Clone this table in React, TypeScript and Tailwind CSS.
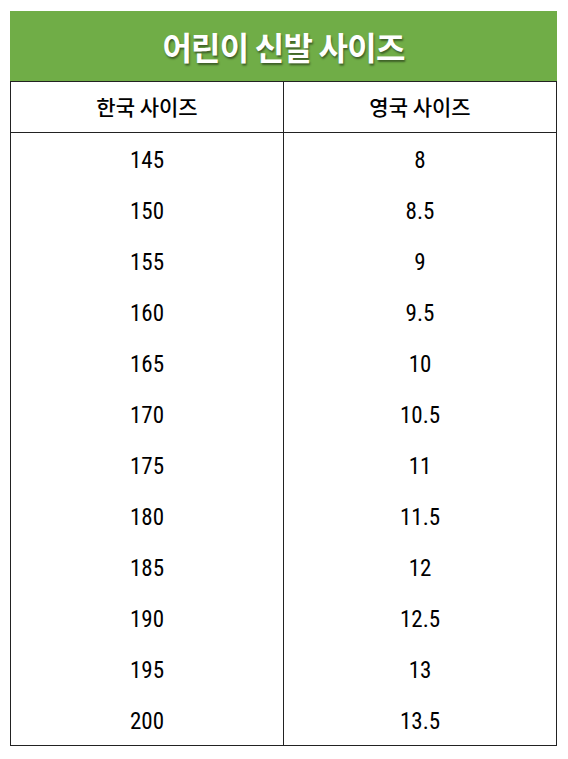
const rows: [string, string][] = [
  ["145", "8"],
  ["150", "8.5"],
  ["155", "9"],
  ["160", "9.5"],
  ["165", "10"],
  ["170", "10.5"],
  ["175", "11"],
  ["180", "11.5"],
  ["185", "12"],
  ["190", "12.5"],
  ["195", "13"],
  ["200", "13.5"],
];

const kr = { fontFamily: '"Noto Sans CJK KR", "Noto Sans", sans-serif' };
const num = { fontFamily: '"Liberation Sans Narrow", "Roboto Condensed", "Liberation Sans", sans-serif' };

export default function App() {
  return (
    <div className="w-[568px] h-[759px] bg-white pt-[11px] pl-[10px]">
      <div className="w-[547px]">
        {/* Title */}
        <div
          className="h-[70px] bg-[#70ad47] flex items-center justify-center text-white text-[32px] font-bold tracking-tight [text-shadow:1px_2px_2px_rgba(0,0,0,0.45)]"
          style={kr}
        >
          어린이 신발 사이즈
        </div>

        {/* Table */}
        <div className="border-l border-r border-b border-[#222]">
          <div className="grid grid-cols-[273px_1fr] h-[52px] border-t border-b border-[#222]">
            <div className="flex items-center justify-center text-[21px] font-medium text-black border-r border-[#222]" style={kr}>
              한국 사이즈
            </div>
            <div className="flex items-center justify-center text-[21px] font-medium text-black" style={kr}>
              영국 사이즈
            </div>
          </div>
          {rows.map(([k, u]) => (
            <div key={k} className="grid grid-cols-[273px_1fr] h-[51px]">
              <div className="flex items-start pt-[11px] justify-center text-[23px] text-black border-r border-[#222]" style={num}>
                {k}
              </div>
              <div className="flex items-start pt-[11px] justify-center text-[23px] text-black" style={num}>
                {u}
              </div>
            </div>
          ))}
        </div>
      </div>
    </div>
  );
}
